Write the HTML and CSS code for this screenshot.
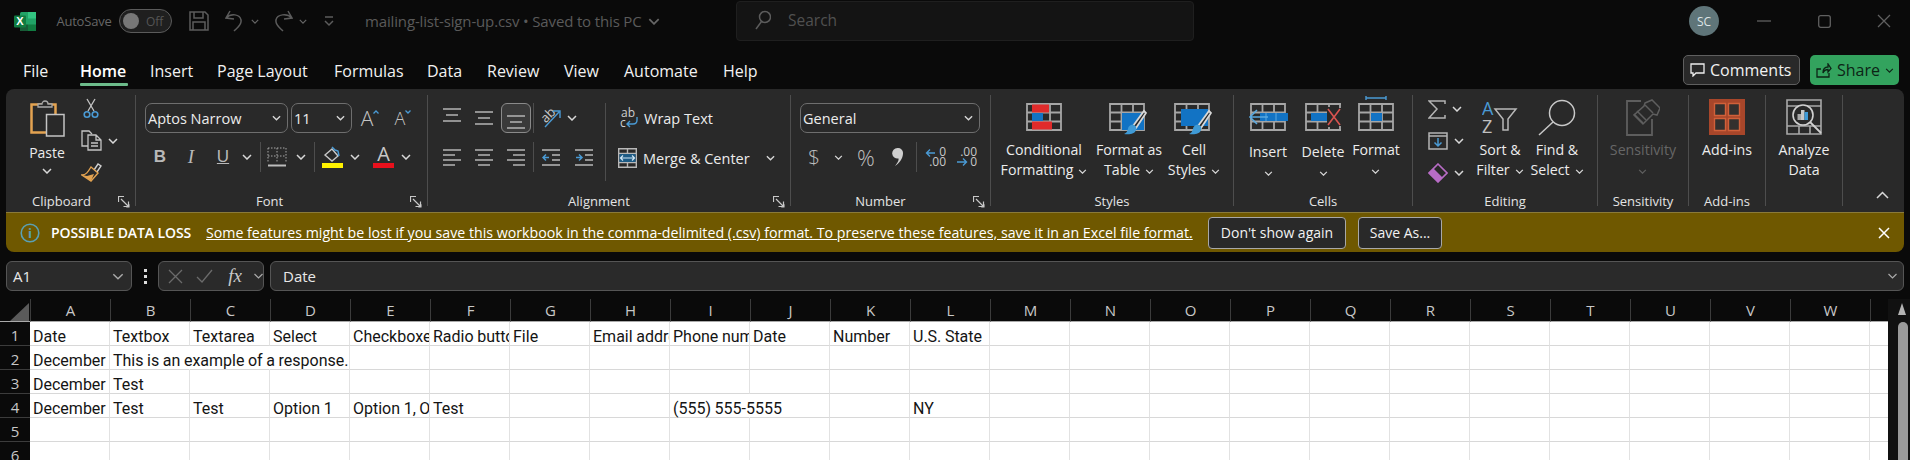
FILE: index.html
```html
<!DOCTYPE html>
<html lang="en">
<head>
<meta charset="utf-8">
<title>mailing-list-sign-up.csv - Excel</title>
<link rel="stylesheet" href="styles.css">
</head>
<body>
<svg class="defs" width="0" height="0">
  <defs>
    <symbol id="c" viewBox="0 0 10 6"><path d="M1 1l4 4 4-4"/></symbol>
    <symbol id="launch" viewBox="0 0 12 12"><path d="M.5 6V.5H6M3 3l7 7M5.5 10.5h5v-5" fill="none" stroke="#c8c8c8" stroke-width="1.2"/><path d="M8 11.5h3.500v-3.500z" fill="#c8c8c8"/></symbol>
    <symbol id="grid" viewBox="0 0 36 28"><path d="M1 1h34v26H1zM1 9.500h34M1 18.500h34M12.500 1v26M24 1v26" fill="none" stroke="#a6a6a6" stroke-width="1.800"/></symbol>
    <symbol id="brush" viewBox="0 0 24 28"><path d="M10 18L21 3l2 2-10 15z" fill="#292929" stroke="#d8d8d8" stroke-width="1.800"/><path d="M8 17c4-1 6 2 5 5-1 4-7 5-12 4 3-1 3-3 4-5 0-2 1-3 3-4z" fill="#3f9ad6"/></symbol>
    <symbol id="a1" viewBox="0 0 18 24"><path d="M0 3h18M3 9h12M0 15h18"/></symbol>
    <symbol id="a2" viewBox="0 0 18 24"><path d="M0 6h18M3 12h12M0 18h18"/></symbol>
    <symbol id="a3" viewBox="0 0 18 24"><path d="M0 10h18M3 16h12M0 22h18"/></symbol>
    <symbol id="l1" viewBox="0 0 18 18"><path d="M0 2h18M0 7h12M0 12h18M0 17h12"/></symbol>
    <symbol id="l2" viewBox="0 0 18 18"><path d="M0 2h18M3 7h12M0 12h18M3 17h12"/></symbol>
    <symbol id="l3" viewBox="0 0 18 18"><path d="M0 2h18M6 7h12M0 12h18M6 17h12"/></symbol>
  </defs>
</svg>

<header class="titlebar">
  <div class="qat">
    <svg class="logo" width="22" height="21" viewBox="0 0 22 21"><rect x="6" y="1" width="16" height="19" rx="1.500" fill="#21a366"/><rect x="14" y="1" width="8" height="6.500" fill="#33c481"/><rect x="14" y="13.500" width="8" height="6.500" fill="#107c41"/><rect x="6" y="13.500" width="8" height="6.500" fill="#185c37"/><rect y="4.500" width="12" height="12" rx="1" fill="#107c41"/><text x="6" y="14" class="logo-x">X</text></svg>
    <span class="autosave">AutoSave</span>
    <span class="toggle"><i class="knob"></i><span>Off</span></span>
    <svg width="20" height="20" viewBox="0 0 20 20" class="qi"><path d="M1 1h15l3 3v15H1zM5 1v6h9V1M4 19v-8h12v8"/></svg>
    <svg width="18" height="22" viewBox="0 0 18 22" class="qi"><path d="M5 1L1 8l8 1M1 8c5-5 14-4 15 2 1 5-4 8-7 11"/></svg>
    <svg class="chev q" width="8" height="5"><use href="#c"/></svg>
    <svg width="20" height="22" viewBox="0 0 20 22" class="qi"><path d="M15 1l4 7-8 1M19 8C14 3 4 4 3 10c-1 5 4 8 7 11"/></svg>
    <svg class="chev q" width="8" height="5"><use href="#c"/></svg>
    <svg width="10" height="12" viewBox="0 0 10 12" class="qi"><path d="M1 2h8M1 6l4 4 4-4"/></svg>
    <span class="doc">mailing-list-sign-up.csv &bull; Saved to this PC</span>
    <svg class="chev q doc-c" width="12" height="7"><use href="#c"/></svg>
  </div>
  <div class="search">
    <svg width="16" height="20" viewBox="0 0 16 20" class="qi"><circle cx="10" cy="7" r="5.500"/><path d="M6.500 11.500L1 19"/></svg>
    <span>Search</span>
  </div>
  <div class="winbtns">
    <span class="avatar">SC</span>
    <svg width="14" height="2" viewBox="0 0 14 2" class="wi"><path d="M0 1h14"/></svg>
    <svg width="13" height="13" viewBox="0 0 13 13" class="wi"><rect x=".7" y=".7" width="11.600" height="11.600" rx="2"/></svg>
    <svg width="14" height="14" viewBox="0 0 14 14" class="wi close"><path d="M1 1l12 12M13 1L1 13"/></svg>
  </div>
</header>

<nav class="tabs">
  <div class="tablist">
    <span>File</span><span class="on">Home</span><span>Insert</span><span>Page Layout</span><span>Formulas</span><span>Data</span><span>Review</span><span>View</span><span>Automate</span><span>Help</span>
  </div>
  <div class="tabact">
    <button class="comments"><svg width="15" height="14" viewBox="0 0 15 14"><path d="M1 1h13v9H6l-3 3v-3H1z"/></svg>Comments</button>
    <button class="share"><svg width="16" height="15" viewBox="0 0 16 15"><path d="M5 6H1v8h12v-4M7 10c0-4 2-6 5-6V1l3 4.500L12 9V6.500c-2 0-4 1-5 3.500z"/></svg>Share<svg class="chev sh" width="9" height="5"><use href="#c"/></svg></button>
  </div>
</nav>

<section class="ribbon">
  <div class="group g-clip">
    <div class="gbody clip">
      <div class="paste">
        <svg width="35" height="38" viewBox="0 0 35 38"><rect x="1.500" y="5.500" width="24" height="28" fill="none" stroke="#e3a351" stroke-width="2.500"/><path d="M8 8V5h4a3 3 0 0 1 6 0h4v3z" fill="#292929" stroke="#a9a9a9" stroke-width="1.300"/><rect x="16.500" y="15.500" width="17.500" height="21.500" fill="#292929" stroke="#c4c4c4" stroke-width="1.500"/></svg>
        <span>Paste</span>
        <svg class="chev" width="10" height="6"><use href="#c"/></svg>
      </div>
      <div class="clipcol">
        <svg width="16" height="21" viewBox="0 0 16 21"><path d="M4 1l7 12M12 1L5 13" fill="none" stroke="#c4c4c4" stroke-width="1.300"/><circle cx="4" cy="16.500" r="2.800" fill="none" stroke="#4a9ad4" stroke-width="1.600"/><circle cx="12" cy="16.500" r="2.800" fill="none" stroke="#4a9ad4" stroke-width="1.600"/></svg>
        <div class="cprow">
          <svg width="21" height="21" viewBox="0 0 21 21"><path d="M7 16H1V1h7l3 3" fill="none" stroke="#c4c4c4" stroke-width="1.300"/><path d="M7 5h8l5 5v10H7zM15 5v5h5M10 13h7M10 16h7" fill="#292929" stroke="#c4c4c4" stroke-width="1.300"/></svg>
          <svg class="chev" width="10" height="6"><use href="#c"/></svg>
        </div>
        <svg width="21" height="20" viewBox="0 0 21 20"><path d="M13 8l4-6 3 2-4 6z" fill="#292929" stroke="#d0d0d0" stroke-width="1.400"/><path d="M10 5l7 6-7 8-9-6c4 0 6-3 9-8z" fill="#292929" stroke="#e3a351" stroke-width="1.400"/><path d="M6 14l7-2-3 7-9-6z" fill="#e3a351"/></svg>
      </div>
    </div>
    <div class="glabel lb-clip">Clipboard<svg class="launch" width="12" height="12"><use href="#launch"/></svg></div>
  </div>

  <div class="group g-font">
    <div class="gbody stack">
      <div class="r1 font1">
        <div class="combo fontname">Aptos Narrow<svg class="chev" width="10" height="6"><use href="#c"/></svg></div>
        <div class="combo fontsize">11<svg class="chev" width="10" height="6"><use href="#c"/></svg></div>
        <span class="grow">A<svg width="6" height="4" viewBox="0 0 6 4"><path d="M.5 3.500L3 1l2.500 2.500"/></svg></span>
        <span class="grow small">A<svg width="6" height="4" viewBox="0 0 6 4"><path d="M.5.500L3 3 5.500.500"/></svg></span>
      </div>
      <div class="r2 font2">
        <b class="fmt">B</b><i class="fmt it">I</i><u class="fmt">U</u>
        <svg class="chev" width="10" height="6"><use href="#c"/></svg>
        <i class="sep"></i>
        <svg width="20" height="20" viewBox="0 0 20 20"><path d="M1 1h18M1 1v15M19 1v15M10 1v15M1 9h18" fill="none" stroke="#a8a8a8" stroke-dasharray="1.500 1.500"/><path d="M1 18.500h18" stroke="#bcbcbc" stroke-width="2"/></svg>
        <svg class="chev" width="10" height="6"><use href="#c"/></svg>
        <i class="sep"></i>
        <svg width="21" height="22" viewBox="0 0 21 22"><path d="M3 9l7-6 6 7-6 5z" fill="none" stroke="#c8c8c8" stroke-width="1.400"/><path d="M10 1l3 3 3 1 1 5" fill="none" stroke="#4a9ad4" stroke-width="1.500"/><rect y="17" width="21" height="5" fill="#fff200"/></svg>
        <svg class="chev" width="10" height="6"><use href="#c"/></svg>
        <svg width="21" height="22" viewBox="0 0 21 22"><text x="10.500" y="15" class="fca">A</text><rect y="17" width="21" height="5" fill="#e8101c"/></svg>
        <svg class="chev" width="10" height="6"><use href="#c"/></svg>
      </div>
    </div>
    <div class="glabel lb-font">Font<svg class="launch" width="12" height="12"><use href="#launch"/></svg></div>
  </div>

  <div class="group g-align">
    <div class="gbody alignb">
      <div class="stack">
        <div class="r1 al1">
          <svg class="ln" width="18" height="24"><use href="#a1"/></svg>
          <svg class="ln" width="18" height="24"><use href="#a2"/></svg>
          <span class="selbox"><svg class="ln" width="18" height="24"><use href="#a3"/></svg></span>
          <i class="sep"></i>
          <svg width="21" height="22" viewBox="0 0 21 22"><text x="8" y="12" transform="rotate(-45 8 9)" class="ori">ab</text><path d="M4 20L18 5M12 4h7v7" fill="none" stroke="#4a9ad4" stroke-width="1.400"/></svg>
          <svg class="chev" width="10" height="6"><use href="#c"/></svg>
        </div>
        <div class="r2 al2">
          <svg class="ln" width="18" height="18"><use href="#l1"/></svg>
          <svg class="ln" width="18" height="18"><use href="#l2"/></svg>
          <svg class="ln" width="18" height="18"><use href="#l3"/></svg>
          <i class="sep"></i>
          <svg width="18" height="18" viewBox="0 0 18 18"><path d="M0 2h18M10 7h8M10 12h8M0 17h18" stroke="#b8b8b8" stroke-width="1.500"/><path d="M7 9.500H1M4 6.500l-3 3 3 3" fill="none" stroke="#4a9ad4" stroke-width="1.500"/></svg>
          <svg width="18" height="18" viewBox="0 0 18 18"><path d="M0 2h18M10 7h8M10 12h8M0 17h18" stroke="#b8b8b8" stroke-width="1.500"/><path d="M1 9.500h6M4 6.500l3 3-3 3" fill="none" stroke="#4a9ad4" stroke-width="1.500"/></svg>
        </div>
      </div>
      <div class="alsep"></div>
      <div class="wrapcol">
        <div class="wrapitem">
          <svg width="19" height="22" viewBox="0 0 19 22"><text x="1" y="10" class="wt">ab</text><text x="0" y="20" class="wt">c</text><path d="M17 10v3c0 3-2 4-4 4H7M10 14l-3 3 3 3" fill="none" stroke="#4a9ad4" stroke-width="1.400"/></svg>
          <span>Wrap Text</span>
        </div>
        <div class="wrapitem merge">
          <svg width="19" height="20" viewBox="0 0 19 20"><path d="M.7.700h17.600v18.600H.7zM.7 5.500h17.600M.7 14.500h17.600M9.500 1v4M9.500 15v4" fill="none" stroke="#b8b8b8" stroke-width="1.400"/><rect x="1.500" y="6" width="16" height="8" fill="#1d5b85"/><path d="M2 10h15M5 7.500L2.500 10 5 12.500M14 7.500l2.500 2.500-2.500 2.500" fill="none" stroke="#cfe6f5" stroke-width="1.200"/></svg>
          <span>Merge &amp; Center</span>
          <svg class="chev" width="10" height="6"><use href="#c"/></svg>
        </div>
      </div>
    </div>
    <div class="glabel lb-al">Alignment<svg class="launch" width="12" height="12"><use href="#launch"/></svg></div>
  </div>

  <div class="group g-num">
    <div class="gbody stack">
      <div class="r1"><div class="combo general">General<svg class="chev" width="10" height="6"><use href="#c"/></svg></div></div>
      <div class="r2 num2">
        <span class="nsym">$</span>
        <svg class="chev" width="9" height="5"><use href="#c"/></svg>
        <span class="nsym pc">%</span>
        <svg width="12" height="20" viewBox="0 0 12 20"><path d="M5.500 1a5 5 0 0 1 5.500 5.500c0 5-4 10-8 12.500 2.500-3 4-5.500 3.500-7.500A5.300 5.300 0 1 1 5.500 1z" fill="#cfcfcf"/></svg>
        <i class="sep"></i>
        <svg width="21" height="20" viewBox="0 0 21 20"><text x="21" y="9" class="dec">0</text><text x="21" y="19" class="dec">.00</text><path d="M10 6H2M5 2.500L1.500 6 5 9.500" fill="none" stroke="#4a9ad4" stroke-width="1.400"/></svg>
        <svg width="21" height="20" viewBox="0 0 21 20"><text x="21" y="9" class="dec">.00</text><text x="21" y="19" class="dec">0</text><path d="M1 15h9M7 11.500l3.500 3.500L7 18.500" fill="none" stroke="#4a9ad4" stroke-width="1.400"/></svg>
      </div>
    </div>
    <div class="glabel lb-num">Number<svg class="launch" width="12" height="12"><use href="#launch"/></svg></div>
  </div>

  <div class="group g-styles">
    <div class="gbody bigs styles">
      <div class="big">
        <span class="bicon t8"><svg width="36" height="28" viewBox="0 0 36 28"><use href="#grid" width="36" height="28"/><rect x="6" y="1.500" width="17" height="8" fill="#e02b2b"/><rect x="6" y="10" width="11" height="8" fill="#1273c4"/><rect x="6" y="18.500" width="20" height="8" fill="#e02b2b"/></svg></span>
        <span class="btxt">Conditional<br>Formatting<svg class="chev" width="9" height="5"><use href="#c"/></svg></span>
      </div>
      <div class="big">
        <span class="bicon t8"><svg width="40" height="34" viewBox="0 0 40 34"><use href="#grid" width="36" height="28"/><rect x="13" y="10" width="22" height="17" fill="#1273c4"/><use href="#brush" x="14" y="5" width="24" height="28"/></svg></span>
        <span class="btxt">Format as<br>Table<svg class="chev" width="9" height="5"><use href="#c"/></svg></span>
      </div>
      <div class="big">
        <span class="bicon t8"><svg width="40" height="34" viewBox="0 0 40 34"><use href="#grid" width="36" height="28"/><rect x="7" y="6" width="27" height="17" fill="#1273c4"/><use href="#brush" x="14" y="5" width="24" height="28"/></svg></span>
        <span class="btxt">Cell<br>Styles<svg class="chev" width="9" height="5"><use href="#c"/></svg></span>
      </div>
    </div>
    <div class="glabel">Styles</div>
  </div>

  <div class="group g-cells">
    <div class="gbody bigs cells">
      <div class="big">
        <span class="bicon t8"><svg width="40" height="28" viewBox="0 0 40 28"><use href="#grid" x="2" width="36" height="28"/><rect x="12" y="10" width="28" height="8" fill="#1273c4"/><path d="M18 10v8M28 10v8" stroke="#5aa9e0"/><path d="M20 14H2M9 7l-7 7 7 7" fill="none" stroke="#5aa9e0" stroke-width="1.600"/></svg></span>
        <span class="btxt low">Insert<br><svg class="chev solo" width="9" height="5"><use href="#c"/></svg></span>
      </div>
      <div class="big">
        <span class="bicon t8"><svg width="36" height="28" viewBox="0 0 36 28"><use href="#grid" width="36" height="28"/><rect x="6" y="10" width="22" height="8" fill="#1273c4"/><rect x="22" y="1" width="14" height="26" fill="#292929"/><path d="M22 1h14M22 27h14M35 1v4M35 23v4M24 1v3M24 24v3" stroke="#a6a6a6" stroke-width="1.800" fill="none"/><path d="M23 6l12 16M35 6L23 22" stroke="#d9534f" stroke-width="1.600"/></svg></span>
        <span class="btxt low">Delete<br><svg class="chev solo" width="9" height="5"><use href="#c"/></svg></span>
      </div>
      <div class="big">
        <span class="bicon t1"><svg width="36" height="35" viewBox="0 0 36 35"><path d="M8 2h20M8 0v4M28 0v4" stroke="#4a9ad4" stroke-width="1.400" fill="none"/><g transform="translate(0 7)"><use href="#grid" width="36" height="28"/><rect x="13" y="10" width="11" height="8" fill="#1273c4"/></g></svg></span>
        <span class="btxt">Format<br><svg class="chev solo" width="9" height="5"><use href="#c"/></svg></span>
      </div>
    </div>
    <div class="glabel">Cells</div>
  </div>

  <div class="group g-edit">
    <div class="gbody bigs edit">
      <div class="editcol">
        <div class="erow"><svg width="18" height="19" viewBox="0 0 18 19"><path d="M17 4V1H1l8 8-8 9h16v-3" fill="none" stroke="#b4b4b4" stroke-width="1.500"/></svg><svg class="chev" width="10" height="6"><use href="#c"/></svg></div>
        <div class="erow"><svg width="20" height="18" viewBox="0 0 20 18"><path d="M1 1h18v16H1zM1 4h18" fill="none" stroke="#b4b4b4" stroke-width="1.500"/><path d="M10 6v8M6.500 10.500L10 14l3.500-3.500" fill="none" stroke="#4a9ad4" stroke-width="1.500"/></svg><svg class="chev" width="10" height="6"><use href="#c"/></svg></div>
        <div class="erow"><svg width="20" height="20" viewBox="0 0 20 20"><path d="M10 1l9 9-9 9-9-9z" fill="none" stroke="#b86cc6" stroke-width="1.600"/><path d="M5.500 5.500l9 9L10 19l-9-9z" fill="#b86cc6"/></svg><svg class="chev" width="10" height="6"><use href="#c"/></svg></div>
      </div>
      <div class="big">
        <span class="bicon t3"><svg width="36" height="36" viewBox="0 0 36 36"><text x="0" y="16" class="az blue">A</text><text x="0" y="34" class="az">Z</text><path d="M13 10h21l-8 10v11h-5V20z" fill="none" stroke="#b8b8b8" stroke-width="1.500"/></svg></span>
        <span class="btxt">Sort &amp;<br>Filter<svg class="chev" width="9" height="5"><use href="#c"/></svg></span>
      </div>
      <div class="big">
        <span class="bicon t3"><svg width="38" height="37" viewBox="0 0 38 37"><circle cx="24" cy="14" r="12.500" fill="none" stroke="#c8c8c8" stroke-width="1.500"/><path d="M15 23L1 36" stroke="#c8c8c8" stroke-width="1.500"/></svg></span>
        <span class="btxt">Find &amp;<br>Select<svg class="chev" width="9" height="5"><use href="#c"/></svg></span>
      </div>
    </div>
    <div class="glabel">Editing</div>
  </div>

  <div class="group g-sens">
    <div class="gbody bigs">
      <div class="big dim">
        <span class="bicon t3"><svg width="34" height="37" viewBox="0 0 34 37"><path d="M15 2H1v34h25V20" fill="none" stroke="#5e5e5e" stroke-width="1.800"/><path d="M19 4l7-3 8 8-3 7-4-1-10 10-9-9 10-9z" fill="#292929" stroke="#5e5e5e" stroke-width="1.500"/><path d="M8 15l9 9M11 12l9 9M19 6l8 8" stroke="#5e5e5e" stroke-width="1.500"/></svg></span>
        <span class="btxt">Sensitivity<br><svg class="chev solo" width="9" height="5"><use href="#c"/></svg></span>
      </div>
    </div>
    <div class="glabel">Sensitivity</div>
  </div>

  <div class="group g-add">
    <div class="gbody bigs">
      <div class="big">
        <span class="bicon t3"><svg width="36" height="36" viewBox="0 0 36 36"><rect width="36" height="36" fill="#a8462a"/><path d="M5.500 4.500h11v12h-11zM19.500 4.500h11v12h-11zM5.500 19.500h11v12h-11zM19.500 19.500h11v12h-11z" fill="#33302e" stroke="#d0603a" stroke-width="1.400"/></svg></span>
        <span class="btxt">Add-ins</span>
      </div>
    </div>
    <div class="glabel">Add-ins</div>
  </div>

  <div class="group g-data">
    <div class="gbody bigs">
      <div class="big">
        <span class="bicon t3"><svg width="36" height="36" viewBox="0 0 36 36"><path d="M1 1h34v34H1zM1 7h34M1 27h34M13 27v8M24 27v8" fill="none" stroke="#a8a8a8" stroke-width="1.600"/><circle cx="17" cy="16" r="10" fill="#292929" stroke="#d0d0d0" stroke-width="1.600"/><path d="M24 23l11 11" stroke="#d0d0d0" stroke-width="1.800"/><rect x="11.500" y="15" width="3.500" height="6" fill="#a8a8a8"/><rect x="15" y="11" width="3.500" height="10" fill="#c8c8c8"/><rect x="18.500" y="13" width="3.500" height="8" fill="#3f9ad6"/></svg></span>
        <span class="btxt">Analyze<br>Data</span>
      </div>
    </div>
    <div class="glabel empty"></div>
  </div>

  <div class="collapse"><svg width="13" height="8" viewBox="0 0 13 8"><path d="M1 7l5.500-5.500L12 7"/></svg></div>
</section>

<section class="banner">
  <svg class="info" width="20" height="20" viewBox="0 0 20 20"><circle cx="10" cy="10" r="8.800"/><text x="10" y="15" class="infoi">i</text></svg>
  <strong>POSSIBLE DATA LOSS</strong>
  <a>Some features might be lost if you save this workbook in the comma-delimited (.csv) format. To preserve these features, save it in an Excel file format.</a>
  <button class="bb dont">Don't show again</button>
  <button class="bb saveas">Save As...</button>
  <svg class="bx" width="12" height="12" viewBox="0 0 12 12"><path d="M1 1l10 10M11 1L1 11"/></svg>
</section>

<section class="fbar">
  <div class="namebox">A1<svg class="fc" width="12" height="7" viewBox="0 0 10 6"><path d="M1 1l4 4 4-4"/></svg></div>
  <div class="dots"><i></i><i></i><i></i></div>
  <div class="fbtns">
    <svg width="15" height="15" viewBox="0 0 15 15" class="fi"><path d="M1 1l13 13M14 1L1 14"/></svg>
    <svg width="17" height="14" viewBox="0 0 17 14" class="fi"><path d="M1 8l5 5L16 1"/></svg>
    <span class="fx">fx</span>
    <svg class="fc" width="11" height="6" viewBox="0 0 10 6"><path d="M1 1l4 4 4-4"/></svg>
  </div>
  <div class="finput">Date<svg class="fc" width="11" height="6" viewBox="0 0 10 6"><path d="M1 1l4 4 4-4"/></svg></div>
</section>

<section class="sheet">
  <div class="gridwrap">
    <div class="grid">
      <div class="corner"><svg width="19" height="18" viewBox="0 0 19 18"><path d="M19 0v18H0z" fill="#5a5a5a"/></svg></div>
      <div class="ch">A</div><div class="ch">B</div><div class="ch">C</div><div class="ch">D</div><div class="ch">E</div><div class="ch">F</div><div class="ch">G</div><div class="ch">H</div><div class="ch">I</div><div class="ch">J</div><div class="ch">K</div><div class="ch">L</div><div class="ch">M</div><div class="ch">N</div><div class="ch">O</div><div class="ch">P</div><div class="ch">Q</div><div class="ch">R</div><div class="ch">S</div><div class="ch">T</div><div class="ch">U</div><div class="ch">V</div><div class="ch">W</div><div class="ch">X</div>

      <div class="rh">1</div>
      <div class="cell">Date</div><div class="cell">Textbox</div><div class="cell">Textarea</div><div class="cell">Select</div><div class="cell">Checkboxes</div><div class="cell">Radio buttons</div><div class="cell">File</div><div class="cell">Email address</div><div class="cell">Phone number</div><div class="cell">Date</div><div class="cell">Number</div><div class="cell">U.S. State</div><div class="cell"></div><div class="cell"></div><div class="cell"></div><div class="cell"></div><div class="cell"></div><div class="cell"></div><div class="cell"></div><div class="cell"></div><div class="cell"></div><div class="cell"></div><div class="cell"></div><div class="cell"></div>

      <div class="rh">2</div>
      <div class="cell">December</div><div class="cell over">This is an example of a response.</div><div class="cell nl"></div><div class="cell"></div><div class="cell"></div><div class="cell"></div><div class="cell"></div><div class="cell"></div><div class="cell"></div><div class="cell"></div><div class="cell"></div><div class="cell"></div><div class="cell"></div><div class="cell"></div><div class="cell"></div><div class="cell"></div><div class="cell"></div><div class="cell"></div><div class="cell"></div><div class="cell"></div><div class="cell"></div><div class="cell"></div><div class="cell"></div><div class="cell"></div>

      <div class="rh">3</div>
      <div class="cell">December</div><div class="cell">Test</div><div class="cell"></div><div class="cell"></div><div class="cell"></div><div class="cell"></div><div class="cell"></div><div class="cell"></div><div class="cell"></div><div class="cell"></div><div class="cell"></div><div class="cell"></div><div class="cell"></div><div class="cell"></div><div class="cell"></div><div class="cell"></div><div class="cell"></div><div class="cell"></div><div class="cell"></div><div class="cell"></div><div class="cell"></div><div class="cell"></div><div class="cell"></div><div class="cell"></div>

      <div class="rh">4</div>
      <div class="cell">December</div><div class="cell">Test</div><div class="cell">Test</div><div class="cell">Option 1</div><div class="cell">Option 1, Option 2</div><div class="cell">Test</div><div class="cell"></div><div class="cell"></div><div class="cell over">(555) 555-5555</div><div class="cell"></div><div class="cell"></div><div class="cell">NY</div><div class="cell"></div><div class="cell"></div><div class="cell"></div><div class="cell"></div><div class="cell"></div><div class="cell"></div><div class="cell"></div><div class="cell"></div><div class="cell"></div><div class="cell"></div><div class="cell"></div><div class="cell"></div>

      <div class="rh">5</div>
      <div class="cell"></div><div class="cell"></div><div class="cell"></div><div class="cell"></div><div class="cell"></div><div class="cell"></div><div class="cell"></div><div class="cell"></div><div class="cell"></div><div class="cell"></div><div class="cell"></div><div class="cell"></div><div class="cell"></div><div class="cell"></div><div class="cell"></div><div class="cell"></div><div class="cell"></div><div class="cell"></div><div class="cell"></div><div class="cell"></div><div class="cell"></div><div class="cell"></div><div class="cell"></div><div class="cell"></div>

      <div class="rh">6</div>
      <div class="cell"></div><div class="cell"></div><div class="cell"></div><div class="cell"></div><div class="cell"></div><div class="cell"></div><div class="cell"></div><div class="cell"></div><div class="cell"></div><div class="cell"></div><div class="cell"></div><div class="cell"></div><div class="cell"></div><div class="cell"></div><div class="cell"></div><div class="cell"></div><div class="cell"></div><div class="cell"></div><div class="cell"></div><div class="cell"></div><div class="cell"></div><div class="cell"></div><div class="cell"></div><div class="cell"></div>
    </div>
  </div>
  <div class="vscroll">
    <svg width="10" height="14" viewBox="0 0 10 14"><path d="M5 1l4 12H1z"/></svg>
    <div class="thumb"></div>
  </div>
</section>
</body>
</html>
```

FILE: styles.css
```css
* { box-sizing: border-box; }
html, body { margin: 0; height: 460px; overflow: hidden; }
body {
  width: 1910px;
  background: #0a0a0a;
  color: #eee;
  font-family: "Open Sans", "Liberation Sans", sans-serif;
  font-size: 14px;
  display: flex;
  flex-direction: column;
}
.defs { position: absolute; }
svg { display: block; flex: none; }
.chev { fill: none; stroke: #d8d8d8; stroke-width: 1.500; }
.chev.q { stroke: #666; }
i { font-style: normal; }

/* title bar */
.titlebar { height: 45px; display: flex; align-items: center; padding-bottom: 3px; background: #0a0a0a; color: #666; }
.qat {
  width: 736px;
  display: grid;
  grid-template-columns: 50px 68px 55px 52px 18px 24px 32px 8px 44px auto auto;
  justify-content: start;
  justify-items: center;
  align-items: center;
}
.logo-x { font: 700 11px "Liberation Sans", sans-serif; fill: #fff; text-anchor: middle; }
.autosave { font-size: 13px; letter-spacing: -.2px; white-space: nowrap; }
.toggle { width: 53px; height: 24px; border: 1.500px solid #5b5b5b; border-radius: 12px; background: #1f1f1f; display: flex; align-items: center; gap: 7px; padding-left: 3px; font-size: 12px; color: #555; }
.knob { width: 16px; height: 16px; border-radius: 50%; background: #777; }
.qi { fill: none; stroke: #5c5c5c; stroke-width: 1.500; }
.doc { margin-left: 14px; color: #5a5a5a; font-size: 15px; letter-spacing: -.15px; white-space: nowrap; }
.doc-c { margin-left: 6px; }
.search { width: 458px; height: 40px; align-self: flex-start; margin-top: 1px; background: #141414; border: 1px solid #1f1f1f; border-radius: 4px; display: flex; align-items: center; gap: 17px; padding: 0 0 2px 18px; font-size: 15.500px; color: #505050; }
.winbtns { flex: 1; display: grid; grid-template-columns: 60px 60px 60px 56px; justify-items: center; align-items: center; padding-left: 480px; }
.avatar { width: 30px; height: 30px; border-radius: 50%; background: #5f7579; color: #dfe5e6; font-size: 12px; display: flex; align-items: center; justify-content: center; }
.wi { fill: none; stroke: #606060; stroke-width: 1.300; }
.wi.close { margin-left: 4px; }

/* tabs */
.tabs { height: 44px; display: flex; align-items: flex-start; justify-content: space-between; padding-right: 11px; }
.tablist { display: grid; grid-template-columns: 57px 70px 67px 117px 93px 60px 77px 60px 99px auto; margin-left: 23px; font-size: 16px; line-height: 22px; color: #f2f2f2; padding-top: 15px; }
.tablist span { white-space: nowrap; }
.tablist .on { font-weight: 600; position: relative; color: #fff; }
.tablist .on::after { content: ""; position: absolute; left: 0; top: 23px; width: 48px; height: 3px; background: #6cbb8a; border-radius: 1px; }
.tabact { display: flex; gap: 10px; margin-top: 10px; }
.comments, .share { height: 30px; border-radius: 5px; font: 16px "Open Sans", sans-serif; display: flex; align-items: center; }
.comments svg, .share svg { fill: none; stroke-width: 1.300; }
.comments { width: 117px; background: #292929; border: 1px solid #5f5f5f; color: #f2f2f2; gap: 5px; padding: 0 0 0 6px; }
.comments svg { stroke: #eee; }
.share { width: 89px; background: #33a35e; border: 0; color: #0d2416; gap: 5px; padding: 0 0 0 6px; }
.share svg { stroke: #0d2416; }

/* ribbon */
.ribbon { height: 123px; margin: 0 6px; background: #292929; border-radius: 8px 8px 0 0; display: flex; padding-top: 6px; color: #ececec; }
.group { height: 111px; border-right: 1px solid #4d4d4d; display: flex; flex-direction: column; flex: none; }
.g-clip { width: 130px; } .g-font { width: 292px; } .g-align { width: 363px; } .g-num { width: 200px; }
.g-styles { width: 243px; } .g-cells { width: 179px; } .g-edit { width: 185px; } .g-sens { width: 91px; }
.g-add { width: 77px; } .g-data { width: 77px; }
.gbody { height: 96px; }
.glabel { height: 15px; line-height: 20px; text-align: center; font-size: 13px; position: relative; color: #e4e4e4; white-space: nowrap; }
.lb-clip { padding-right: 18px; }
.lb-font { padding-right: 24px; }
.lb-al { padding-right: 20px; }
.lb-num { padding-right: 20px; }
.launch { position: absolute; right: 5px; top: 5px; }
.sep { width: 1px; height: 30px; background: #4d4d4d; }
.stack { display: flex; flex-direction: column; gap: 9px; padding-top: 8px; }
.r1, .r2 { display: grid; height: 30px; justify-items: center; align-items: center; }

.combo { height: 30px; border: 1px solid #6e6e6e; border-radius: 7px; display: flex; align-items: center; justify-content: space-between; padding: 0 6px 0 2px; font-size: 14.500px; color: #ececec; }
.combo .chev { width: 9px; }

/* clipboard */
.clip { display: flex; }
.paste { width: 68px; margin-left: 7px; display: flex; flex-direction: column; align-items: center; padding-top: 4px; font-size: 14px; }
.paste span { margin-top: 6px; line-height: 20px; }
.paste .chev { margin-top: 5px; }
.clipcol { display: flex; flex-direction: column; gap: 11px; padding-top: 3px; }
.clipcol > svg:first-child { margin-left: 2px; }
.cprow { display: flex; align-items: center; gap: 6px; }

/* font */
.font1 { grid-template-columns: 146px 61px 36px 30px; margin-left: 9px; width: 273px; }
.fontname { width: 143px; justify-self: start; }
.fontsize { width: 61px; }
.grow { font-size: 21px; color: #c4c4c4; font-weight: 300; display: flex; align-items: flex-start; line-height: 24px; }
.grow.small { font-size: 18px; }
.grow svg { margin-top: 4px; fill: none; stroke: #4a9ad4; stroke-width: 1.300; }
.font2 { grid-template-columns: 30px 32px 32px 16px 10px 24px 24px 2px 34px 12px 44px 2px; margin-left: 9px; width: 262px; }
.fmt { font: 17px "Liberation Sans", sans-serif; color: #b8b8b8; }
b.fmt { font-weight: 700; }
.it { font-style: italic; font-family: "Liberation Serif", serif; font-size: 19px; }
.fca { font: 400 20px "Open Sans", sans-serif; fill: #c8c8c8; text-anchor: middle; }

/* alignment */
.alignb { display: flex; }
.ln { fill: none; stroke: #b4b4b4; stroke-width: 1.500; }
.al1 { grid-template-columns: 32px 32px 32px 2px 34px 8px; margin-left: 8px; }
.selbox { width: 30px; height: 30px; border: 1px solid #8a8a8a; border-radius: 6px; background: #3a3a3a; display: flex; align-items: center; justify-content: center; }
.al2 { grid-template-columns: 32px 32px 32px 2px 34px 32px; margin-left: 8px; }
.ori { font: 13px "Open Sans", sans-serif; fill: #c8c8c8; text-anchor: middle; }
.alsep { width: 1px; height: 78px; background: #4d4d4d; margin: 8px 0 0 5px; }
.wrapcol { display: flex; flex-direction: column; gap: 10px; padding-top: 8px; margin-left: 12px; }
.wrapitem { display: flex; align-items: center; gap: 5px; height: 30px; font-size: 14.500px; white-space: nowrap; padding-left: 2px; }
.wrapitem.merge { padding-left: 0; gap: 6px; }
.wrapitem .chev { margin-left: 10px; width: 9px; }
.wt { font: 12px "Open Sans", sans-serif; fill: #d0d0d0; }

/* number */
.general { width: 180px; margin-left: 9px; justify-self: start; }
.g-num .r1 { justify-items: start; }
.num2 { grid-template-columns: 28px 20px 36px 28px 8px 30px 32px; margin-left: 9px; width: 182px; }
.nsym { font-size: 21px; color: #bdbdbd; line-height: 30px; font-weight: 300; }
.pc { font-size: 22px; }
.dec { font: 12px "Open Sans", sans-serif; fill: #c8c8c8; text-anchor: end; }

/* large tools */
.bigs { display: grid; justify-items: center; grid-auto-flow: column; justify-content: start; }
.styles { grid-template-columns: 106px 64px 66px; }
.cells { grid-template-columns: 68px 42px 64px; }
.edit { grid-template-columns: 57px 60px 54px; }
.g-sens .bigs { grid-template-columns: 90px; }
.g-add .bigs { grid-template-columns: 76px; }
.g-data .bigs { grid-template-columns: 76px; }
.big { display: flex; flex-direction: column; align-items: center; width: 100%; white-space: nowrap; }
.bicon { height: 45px; display: flex; justify-content: center; }
.t8 { padding-top: 8px; }
.t3 { padding-top: 4px; }
.t1 { padding-top: 1px; }
.btxt { display: block; text-align: center; line-height: 20px; font-size: 14.200px; }
.btxt.low { padding-top: 2px; }
.btxt .chev { display: inline-block; vertical-align: middle; margin-left: 5px; }
.btxt .chev.solo { margin-left: 0; }
.dim { color: #666; }
.dim .chev { stroke: #5e5e5e; }
.az { font: 18px "Open Sans", sans-serif; fill: #c0c0c0; }
.az.blue { fill: #4a9ad4; }

/* editing */
.editcol { display: flex; flex-direction: column; gap: 12px; padding: 4px 0 0 15px; justify-self: start; }
.erow { height: 20px; display: flex; align-items: center; gap: 6px; }

.collapse { flex: 1; display: flex; align-items: flex-end; justify-content: flex-end; padding: 0 15px 7px 0; height: 111px; }
.collapse svg { fill: none; stroke: #d8d8d8; stroke-width: 1.500; }

/* banner */
.banner { height: 40px; margin: 0 6px; background: #6f5800; border-top: 1px solid #8a7a3a; border-radius: 0 0 8px 8px; display: flex; align-items: center; color: #fff; padding-left: 14px; }
.info { fill: none; stroke: #5aa0b4; stroke-width: 1.600; }
.infoi { font: 700 13px "Open Sans", sans-serif; fill: #5aa0b4; stroke: none; text-anchor: middle; }
.banner strong { font-weight: 600; letter-spacing: -.1px; margin-left: 11px; white-space: nowrap; font-size: 14px; width: 155px; }
.banner a { text-decoration: underline; white-space: nowrap; font-size: 14.200px; width: 1002px; }
.bb { height: 32px; background: #292929; border: 1px solid #a8a8a8; border-radius: 4px; color: #f2f2f2; font: 14px "Open Sans", sans-serif; padding: 0; }
.dont { width: 138px; }
.saveas { width: 84px; margin-left: 12px; }
.bx { margin-left: auto; margin-right: 14px; fill: none; stroke: #fff; stroke-width: 1.500; }

/* formula bar */
.fbar { height: 30px; margin: 9px 6px 0; display: flex; }
.namebox, .fbtns, .finput { height: 30px; background: #2a2a2a; border: 1px solid #555; border-radius: 6px; display: flex; align-items: center; font-size: 15px; color: #e8e8e8; }
.namebox { width: 126px; padding: 0 7px 0 6px; justify-content: space-between; }
.dots { width: 26px; display: flex; flex-direction: column; align-items: center; justify-content: center; gap: 3px; }
.dots i { width: 3px; height: 3px; background: #ddd; }
.fbtns { width: 106px; display: grid; grid-template-columns: 30px 28px 34px 12px; justify-items: center; padding-left: 1px; }
.fi { fill: none; stroke: #6b6b6b; stroke-width: 1.300; }
.fc { fill: none; stroke: #aaa; stroke-width: 1.200; }
.fx { font: italic 19px "Liberation Serif", serif; color: #c8c8c8; }
.finput { flex: 1; margin-left: 6px; padding: 0 5px 0 12px; justify-content: space-between; }

/* sheet */
.sheet { margin-top: 8px; height: 161px; display: flex; overflow: hidden; }
.gridwrap { width: 1888px; overflow: hidden; }
.grid { display: grid; grid-template-columns: 30px repeat(24, 80px); grid-template-rows: 23px repeat(6, 24px); width: 1950px; font-family: Roboto, "Liberation Sans", sans-serif; font-size: 16px; }
.corner { background: #0a0a0a; padding: 4px 0 0 10px; border-bottom: 1px solid #aaa; }
.ch { background: #0a0a0a; color: #c8c8c8; text-align: center; line-height: 22px; font-family: "Open Sans", sans-serif; font-size: 15px; border-left: 1px solid #3c3c3c; border-bottom: 1px solid #aaa; }
.rh { background: #0a0a0a; color: #c8c8c8; text-align: center; line-height: 26px; font-family: "Open Sans", sans-serif; font-size: 15px; border-bottom: 1px solid #3c3c3c; }
.cell { background: #fff; color: #141414; border-right: 1px solid #e2e2e2; border-bottom: 1px solid #d8d8d8; padding: 2px 0 0 3px; line-height: 25px; word-spacing: -.4px; white-space: nowrap; overflow: hidden; }
.cell.over { overflow: visible; position: relative; z-index: 1; border-right-color: transparent; }
.cell.nl { border-right-color: transparent; }
.vscroll { width: 22px; background: #111; display: flex; flex-direction: column; align-items: flex-end; padding: 3px 2px 0 0; }
.vscroll svg { fill: #b4b4b4; margin-right: 1px; }
.thumb { width: 10px; flex: 1; margin-top: 6px; background: #9a9a9a; border-radius: 5px 5px 0 0; }
```
